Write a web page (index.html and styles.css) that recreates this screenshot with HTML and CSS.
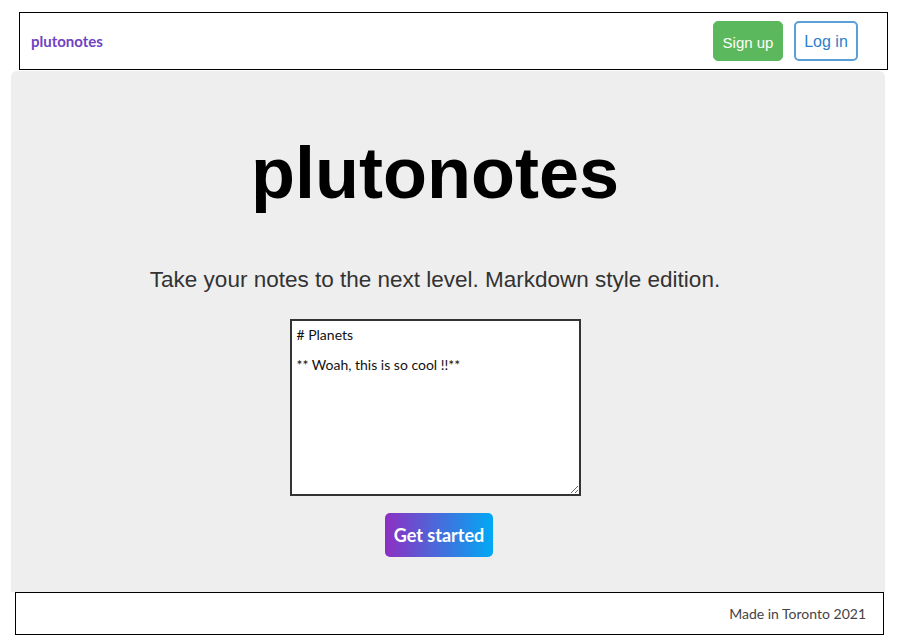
FILE: index.html
```html
<!DOCTYPE html>
<html lang="en">
<head>
<meta charset="utf-8">
<title>plutonotes</title>
<link rel="stylesheet" href="styles.css">
</head>
<body>
<nav class="navbar">
  <a class="brand" href="#">plutonotes</a>
  <div class="nav-actions">
    <button class="btn btn-signup">Sign up</button>
    <button class="btn btn-login">Log in</button>
  </div>
</nav>
<main class="jumbotron">
  <h1 class="title">plutonotes</h1>
  <p class="lead">Take your notes to the next level. Markdown style edition.</p>
  <textarea class="editor"># Planets

** Woah, this is so cool !!**</textarea>
  <button class="btn-start">Get started</button>
</main>
<footer class="footer">
  <span>Made in Toronto 2021</span>
</footer>
</body>
</html>
```
FILE: styles.css
```css
* { box-sizing: border-box; }
html, body { margin: 0; padding: 0; background: #fff; }
body { font-family: Lato, "Open Sans", sans-serif; color: #212529; }

.navbar {
  margin: 12px 11px 0 19px;
  height: 58px;
  border: 1px solid #000;
  display: flex;
  align-items: center;
  justify-content: space-between;
  padding: 0 29px 0 11px;
}
.brand {
  font-family: Lato, sans-serif;
  font-weight: 700;
  font-size: 15px;
  color: #6f42c1;
  text-decoration: none;
}
.nav-actions { display: flex; gap: 11px; }
.btn {
  font-family: "Liberation Sans", Arial, sans-serif;
  height: 40px;
  border-radius: 5px;
  cursor: pointer;
  padding: 2px 0 0;
}
.btn-signup {
  width: 70px;
  background: #5cb85c;
  border: 1px solid #5cb85c;
  color: #fff;
  font-size: 15px;
}
.btn-login {
  width: 64px;
  background: #fff;
  border: 2px solid #5b9fd9;
  color: #2b7fcb;
  font-size: 16px;
}

.jumbotron {
  margin: 1px 14px 0 11px;
  background: #eeeeee;
  border-radius: 6px 6px 0 0;
  height: 521px;
  padding: 59px 45px 0 19px;
  display: flex;
  flex-direction: column;
  align-items: center;
}
.title {
  margin: 0;
  font-family: "Liberation Sans", Arial, sans-serif;
  font-weight: 700;
  font-size: 72px;
  line-height: 1.2;
  color: #000;
}
.lead {
  margin: 47px 0 0;
  font-family: "Liberation Sans", Arial, sans-serif;
  font-size: 22.5px;
  line-height: 33px;
  color: #333;
}
.editor {
  margin-top: 23px;
  width: 291px;
  height: 177px;
  border: 2px solid #333;
  background: #fff;
  padding: 6px 5px 5px;
  font-family: Lato, sans-serif;
  font-size: 14px;
  line-height: 15px;
  color: #111;
  resize: both;
  outline: none;
}
.btn-start {
  margin: 17px 0 0 8px;
  width: 108px;
  height: 44px;
  border: none;
  border-radius: 5px;
  background: linear-gradient(90deg, #8e2fc2 0%, #00a9f4 100%);
  color: #fff;
  font-family: Lato, sans-serif;
  font-weight: 700;
  font-size: 18px;
  cursor: pointer;
  padding: 0;
}

.footer {
  margin: 0 15px 0 15px;
  height: 43px;
  border: 1px solid #000;
  background: #fff;
  display: flex;
  align-items: center;
  justify-content: flex-end;
  padding-right: 17px;
  font-family: Lato, sans-serif;
  font-size: 14px;
  color: #444;
}
```
